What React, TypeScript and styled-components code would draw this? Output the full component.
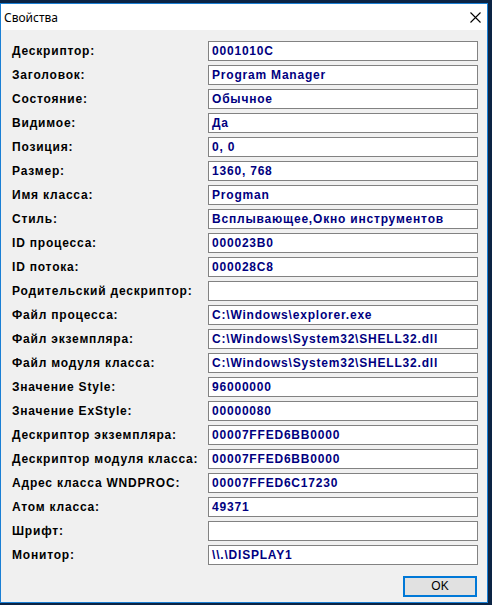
import React from "react";
import styled, { createGlobalStyle } from "styled-components";

const Global = createGlobalStyle`
  html, body {
    margin: 0;
    padding: 0;
    background: #0c2444;
  }
  body {
    font-family: "Liberation Sans", Arial, sans-serif;
  }
  * { box-sizing: border-box; }
`;

const Window = styled.div`
  margin-top: 3px;
  width: 488px;
  height: 600px;
  border: 1px solid #1a7fd4;
  display: flex;
  flex-direction: column;
  background: #f0f0f0;
`;

const TitleBar = styled.div`
  height: 26px;
  background: #ffffff;
  display: flex;
  align-items: center;
  justify-content: space-between;
  padding: 0 6px 0 3px;
`;

const Title = styled.span`
  font-family: "Noto Sans", "Open Sans", sans-serif;
  font-size: 12px;
  color: #000;
`;

const CloseIcon = styled.svg`
  width: 11px;
  height: 11px;
  display: block;
`;

const Client = styled.div`
  flex: 1;
  display: flex;
  flex-direction: column;
  padding: 11px 9px 5px 11px;
`;

const Grid = styled.div`
  display: grid;
  grid-template-columns: 196px 270px;
  grid-auto-rows: 20px;
  row-gap: 4px;
`;

const Label = styled.div`
  font-size: 12px;
  font-weight: bold;
  letter-spacing: 0.8px;
  color: #000;
  line-height: 20px;
  white-space: nowrap;
`;

const Field = styled.div`
  border: 1px solid #828282;
  background: #fff;
  padding: 0 3px;
  font-size: 12px;
  font-weight: bold;
  letter-spacing: 0.8px;
  line-height: 18px;
  color: #000080;
  white-space: nowrap;
  overflow: hidden;
`;

const ButtonRow = styled.div`
  margin-top: 11px;
  display: flex;
  justify-content: flex-end;
  padding-right: 1px;
`;

const Button = styled.button`
  width: 74px;
  height: 21px;
  border: 2px solid #0078d7;
  background: #e1e1e1;
  font-family: "Liberation Sans", Arial, sans-serif;
  font-size: 12px;
  color: #000;
  padding: 0;
  line-height: 17px;
`;

const rows: [string, string][] = [
  ["Дескриптор:", "0001010C"],
  ["Заголовок:", "Program Manager"],
  ["Состояние:", "Обычное"],
  ["Видимое:", "Да"],
  ["Позиция:", "0, 0"],
  ["Размер:", "1360, 768"],
  ["Имя класса:", "Progman"],
  ["Стиль:", "Всплывающее,Окно инструментов"],
  ["ID процесса:", "000023B0"],
  ["ID потока:", "000028C8"],
  ["Родительский дескриптор:", ""],
  ["Файл процесса:", "C:\\Windows\\explorer.exe"],
  ["Файл экземпляра:", "C:\\Windows\\System32\\SHELL32.dll"],
  ["Файл модуля класса:", "C:\\Windows\\System32\\SHELL32.dll"],
  ["Значение Style:", "96000000"],
  ["Значение ExStyle:", "00000080"],
  ["Дескриптор экземпляра:", "00007FFED6BB0000"],
  ["Дескриптор модуля класса:", "00007FFED6BB0000"],
  ["Адрес класса WNDPROC:", "00007FFED6C17230"],
  ["Атом класса:", "49371"],
  ["Шрифт:", ""],
  ["Монитор:", "\\\\.\\DISPLAY1"],
];

export default function App() {
  return (
    <>
      <Global />
      <Window>
        <TitleBar>
          <Title>Свойства</Title>
          <CloseIcon viewBox="0 0 11 11">
            <path d="M0.5 0.5 L10.5 10.5 M10.5 0.5 L0.5 10.5" stroke="#000" strokeWidth="1.1" fill="none" />
          </CloseIcon>
        </TitleBar>
        <Client>
          <Grid>
            {rows.map(([label, value]) => (
              <React.Fragment key={label}>
                <Label>{label}</Label>
                <Field>{value}</Field>
              </React.Fragment>
            ))}
          </Grid>
          <ButtonRow>
            <Button>OK</Button>
          </ButtonRow>
        </Client>
      </Window>
    </>
  );
}
